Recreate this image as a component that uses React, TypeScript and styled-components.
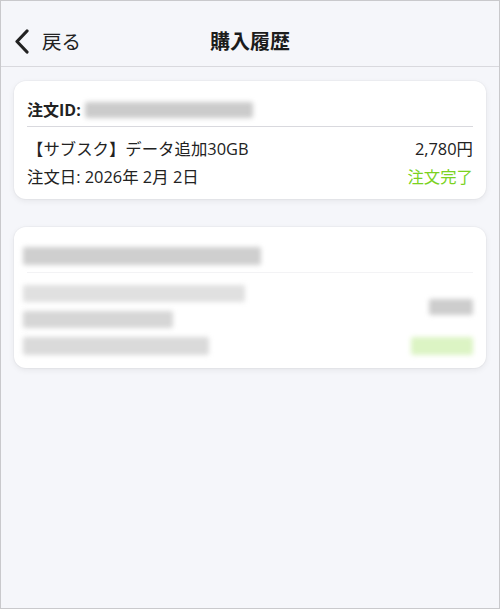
import React from 'react'
import styled, { createGlobalStyle } from 'styled-components'

const GlobalStyle = createGlobalStyle`
  html, body {
    margin: 0;
    padding: 0;
    background: #f5f6fa;
  }
  body {
    font-family: "Open Sans", "Noto Sans CJK JP", sans-serif;
    color: #222;
  }
`

const Screen = styled.div`
  box-sizing: border-box;
  width: 500px;
  height: 609px;
  border: 1px solid #c9c9cc;
  background: #f5f6fa;
  display: flex;
  flex-direction: column;
`

const Header = styled.header`
  box-sizing: border-box;
  height: 66px;
  padding-top: 15px;
  border-bottom: 1px solid #d9d9de;
  display: grid;
  grid-template-columns: 1fr auto 1fr;
  align-items: center;
`

const BackButton = styled.button`
  justify-self: start;
  display: flex;
  align-items: center;
  gap: 12px;
  padding: 0 0 0 13px;
  border: none;
  background: none;
  color: #222;
  font-family: "Noto Sans CJK JP", sans-serif;
  font-size: 19.5px;
  line-height: 24px;
  cursor: pointer;
`

const Title = styled.h1`
  margin: 0;
  font-family: "Noto Sans CJK JP", sans-serif;
  font-size: 20px;
  font-weight: 700;
  line-height: 24px;
  color: #1c1c1c;
`

const List = styled.main`
  display: flex;
  flex-direction: column;
  gap: 28px;
  padding: 14px 13px;
`

const Card = styled.section`
  background: #fff;
  border-radius: 12px;
  padding: 12px 13px;
  box-shadow: 0 0 0 1px rgba(0, 0, 0, 0.025), 0 2px 6px rgba(0, 0, 0, 0.07);
`

const IdRow = styled.div<{ $faint?: boolean }>`
  box-sizing: border-box;
  height: 34px;
  display: flex;
  align-items: center;
  gap: 4px;
  border-bottom: 1px solid ${(p) => (p.$faint ? '#f3f3f5' : '#d9d9de')};
  font-size: 16px;
  font-weight: 700;
  line-height: 20px;
`

const Row = styled.div<{ $first?: boolean }>`
  min-height: 20px;
  display: flex;
  justify-content: space-between;
  align-items: center;
  margin-top: ${(p) => (p.$first ? 12 : 8)}px;
  font-size: 16.4px;
  line-height: 20px;
`

const Status = styled.span`
  color: #7bd21f;
`

const Lines = styled.div`
  display: flex;
  flex-direction: column;
  gap: 9px;
`

const Blur = styled.div<{ $w: number; $h: number; $tone: string; $shift?: number }>`
  width: ${(p) => p.$w}px;
  height: ${(p) => p.$h}px;
  margin-left: ${(p) => p.$shift ?? 0}px;
  background: ${(p) => p.$tone};
  filter: blur(2.5px);
  border-radius: 2px;
`

const Chevron = () => (
  <svg width="16" height="25" viewBox="0 0 16 25" fill="none">
    <polyline points="13,2 3,12.5 13,23" stroke="#222" strokeWidth="3.2" strokeLinecap="round" strokeLinejoin="round" />
  </svg>
)

export default function App() {
  return (
    <>
      <GlobalStyle />
      <Screen>
        <Header>
          <BackButton>
            <Chevron />
            戻る
          </BackButton>
          <Title>購入履歴</Title>
          <span />
        </Header>
        <List>
          <Card>
            <IdRow>
              注文ID:
              <Blur $w={168} $h={16} $tone="#cbcbcb" />
            </IdRow>
            <Row $first>
              <span>【サブスク】データ追加30GB</span>
              <span>2,780円</span>
            </Row>
            <Row>
              <span>注文日: 2026年 2月 2日</span>
              <Status>注文完了</Status>
            </Row>
          </Card>
          <Card>
            <IdRow $faint>
              <Blur $w={238} $h={18} $tone="#cfcfcf" $shift={-4} />
            </IdRow>
            <Row $first>
              <Lines>
                <Blur $w={222} $h={17} $tone="#e0e0e0" $shift={-4} />
                <Blur $w={150} $h={17} $tone="#d6d6d6" $shift={-4} />
              </Lines>
              <Blur $w={44} $h={16} $tone="#cdcdcd" />
            </Row>
            <Row>
              <Blur $w={186} $h={18} $tone="#dadada" $shift={-4} />
              <Blur $w={62} $h={18} $tone="#dcf4c4" />
            </Row>
          </Card>
        </List>
      </Screen>
    </>
  )
}
